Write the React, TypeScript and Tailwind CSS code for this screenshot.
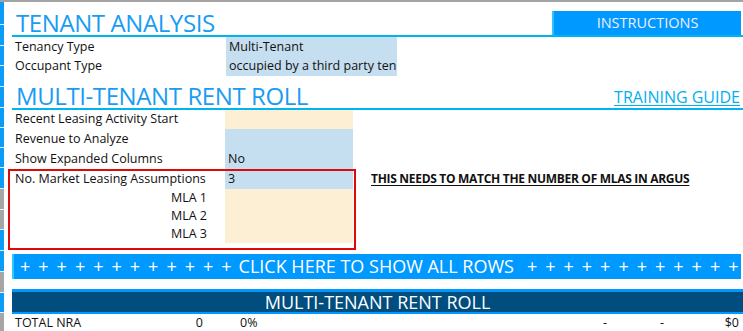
import React from "react";

const strip: { h: string; gray: boolean }[] = [
  { h: "h-[23px]", gray: false },
  { h: "h-[21px]", gray: false },
  { h: "h-[20px]", gray: false },
  { h: "h-[21px]", gray: false },
  { h: "h-[21px]", gray: false },
  { h: "h-[20px]", gray: false },
  { h: "h-[20px]", gray: false },
  { h: "h-[20px]", gray: false },
  { h: "h-[21px]", gray: false },
  { h: "h-[21px]", gray: true },
  { h: "h-[20px]", gray: true },
  { h: "h-[21px]", gray: false },
  { h: "h-[21px]", gray: false },
  { h: "h-[21px]", gray: true },
  { h: "h-[20px]", gray: false },
  { h: "h-[20px]", gray: true },
];

function Row({
  label,
  value,
  tone,
  right,
  h = "h-[20px]",
  extra,
}: {
  label: string;
  value?: string;
  tone: "blue" | "peach";
  right?: boolean;
  h?: string;
  extra?: React.ReactNode;
}) {
  return (
    <div className={`flex items-stretch ${h}`}>
      <div
        className={`w-[213px] flex items-center ${
          right ? "justify-end pr-[18px]" : "pl-[3px]"
        }`}
      >
        {label}
      </div>
      <div
        className={`w-[128px] flex items-center pl-[3px] ${
          tone === "blue" ? "bg-[#c6dff0]" : "bg-[#fdefd4]"
        }`}
      >
        {value}
      </div>
      {extra}
    </div>
  );
}

function Pluses() {
  return (
    <div className="flex gap-[9px]">
      {Array.from({ length: 12 }).map((_, i) => (
        <span key={i} className="w-[9.3px] text-center">
          +
        </span>
      ))}
    </div>
  );
}

export default function App() {
  return (
    <div className="w-[743px] h-[331px] overflow-hidden bg-white font-['Open_Sans',sans-serif] text-[12.5px] text-[#111]">
      <div className="h-[2px] bg-[#a3a3a3]" />
      <div className="flex">
        <div className="w-[4px] flex flex-col shrink-0">
          {strip.map((s, i) => (
            <div
              key={i}
              className={`${s.h} border-b-[1.5px] border-[#e4f4ff] ${
                s.gray ? "bg-[#a6a6a6]" : "bg-[#0a9cf7]"
              }`}
            />
          ))}
        </div>
        <div className="ml-[8px] w-[731px] relative shrink-0">
          {/* Title 1 */}
          <div className="h-[35px] flex items-end justify-between border-b-2 border-[#00b4f0]">
            <div className="pl-[4px] text-[24px] leading-[25px] text-[#1a9cf2] tracking-[-0.4px]">
              TENANT ANALYSIS
            </div>
            <div className="w-[189px] h-[24px] mr-[2px] bg-[#0099ff] border-l-2 border-[#2ec4ff] flex items-center justify-center text-[14.5px] text-[#f2ecff]">
              INSTRUCTIONS
            </div>
          </div>
          {/* tenancy rows */}
          <div className="flex h-[20px]">
            <div className="w-[214px] pl-[3px] flex items-center">Tenancy Type</div>
            <div className="w-[171px] bg-[#c6dff0] pl-[3px] flex items-center">Multi-Tenant</div>
          </div>
          <div className="flex h-[19px]">
            <div className="w-[214px] pl-[3px] flex items-center">Occupant Type</div>
            <div className="w-[171px] bg-[#c6dff0] pl-[3px] flex items-center overflow-hidden whitespace-nowrap">
              occupied by a third party ten
            </div>
          </div>
          {/* Title 2 */}
          <div className="h-[34px] flex items-end justify-between border-b-2 border-[#00b4f0]">
            <div className="pl-[4px] text-[24px] leading-[25px] text-[#1a9cf2] tracking-[-0.4px]">
              MULTI-TENANT RENT ROLL
            </div>
            <div className="mr-[3px] mb-[1px] text-[16px] leading-[20px] text-[#00b0f0] underline underline-offset-2">
              TRAINING GUIDE
            </div>
          </div>
          {/* parameters */}
          <div className="relative">
            <Row label="Recent Leasing Activity Start" tone="peach" h="h-[19px]" />
            <Row label="Revenue to Analyze" tone="blue" />
            <Row label="Show Expanded Columns" value="No" tone="blue" />
            <Row
              label="No. Market Leasing Assumptions"
              value="3"
              tone="blue"
              extra={
                <div className="ml-[18px] flex items-center font-bold text-[12px] underline underline-offset-2 tracking-[-0.3px]">
                  THIS NEEDS TO MATCH THE NUMBER OF MLAS IN ARGUS
                </div>
              }
            />
            <Row label="MLA 1" tone="peach" right h="h-[19px]" />
            <Row label="MLA 2" tone="peach" right h="h-[17px]" />
            <Row label="MLA 3" tone="peach" right h="h-[18px]" />
            <div className="absolute left-[-4px] top-[59px] w-[348px] h-[81px] border-2 border-[#dd0a0a] pointer-events-none" />
          </div>
          {/* click bar */}
          <div className="mt-[11px] h-[25px] mr-[2px] bg-[#0099ff] border-l-2 border-[#30c8ff] flex items-center pl-[6px] text-[18px] text-white whitespace-nowrap">
            <Pluses />
            <span className="ml-[8px] mr-[13px]">CLICK HERE TO SHOW ALL ROWS</span>
            <Pluses />
          </div>
          {/* dark bar */}
          <div className="mt-[10px] h-[25px] bg-[#004d7e] border-t-[3px] border-b-2 border-[#0099ff] flex items-center justify-center text-[18px] text-white">
            MULTI-TENANT RENT ROLL
          </div>
          {/* total row */}
          <div className="flex h-[18px] items-center">
            <div className="w-[150px] pl-[3px]">TOTAL NRA</div>
            <div className="w-[41px] text-right">0</div>
            <div className="w-[37px]" />
            <div className="w-[30px]">0%</div>
            <div className="w-[333px]" />
            <div className="w-[57px]">-</div>
            <div className="w-[50px]">-</div>
            <div className="flex-1 text-right pr-[4px]">$0</div>
          </div>
        </div>
      </div>
    </div>
  );
}
